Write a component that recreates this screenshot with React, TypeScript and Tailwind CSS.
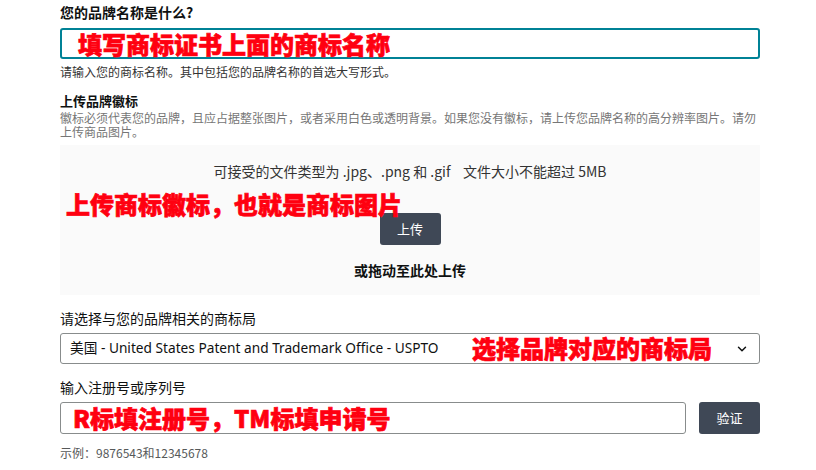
import { ChevronDown } from "lucide-react";

const cjk = { fontFamily: '"Noto Sans CJK SC", "Noto Sans", sans-serif' };
const latin = { fontFamily: '"Noto Sans", "Noto Sans CJK SC", sans-serif' };

function Note({ children, className }: { children: React.ReactNode; className: string }) {
  return (
    <span
      className={`pointer-events-none absolute whitespace-nowrap text-[24px] font-black leading-none text-[#ff0010] [-webkit-text-stroke:0.7px_#ff0010] ${className}`}
      style={cjk}
    >
      {children}
    </span>
  );
}

export default function App() {
  return (
    <div className="h-[470px] w-[816px] overflow-hidden bg-white text-[#0f1111]" style={cjk}>
      <div className="ml-[60px] flex w-[700px] flex-col">
        <h2 className="mt-[3px] text-[14px] font-bold leading-[18px]">您的品牌名称是什么?</h2>
        <div className="relative mt-[7px] h-[31px] rounded-[3px] border-2 border-[#008296]">
          <Note className="left-[16px] top-[2px]">填写商标证书上面的商标名称</Note>
        </div>
        <p className="mt-[5px] text-[12px] leading-[16px] text-[#333]">
          请输入您的商标名称。其中包括您的品牌名称的首选大写形式。
        </p>

        <h3 className="mt-[13px] text-[13px] font-bold leading-[16px]">上传品牌徽标</h3>
        <p className="mt-[2px] text-[12px] leading-[14px] text-[#767676]">
          徽标必须代表您的品牌，且应占据整张图片，或者采用白色或透明背景。如果您没有徽标，请上传您品牌名称的高分辨率图片。请勿
          <br />
          上传商品图片。
        </p>

        <div className="relative mt-[6px] flex h-[150px] flex-col items-center bg-[#fafafa]">
          <p className="mt-[17px] text-[14px] leading-[18px] text-[#333]">
            可接受的文件类型为 .jpg、.png 和 .gif&nbsp;&nbsp;&nbsp;&nbsp;文件大小不能超过 5MB
          </p>
          <button className="mt-[33px] h-[32px] w-[61px] rounded-[3px] bg-[#3f4856] text-[13px] text-white">
            上传
          </button>
          <p className="mt-[16px] text-[14px] font-bold leading-[18px]">或拖动至此处上传</p>
          <Note className="left-[6px] top-[47px]">上传商标徽标，也就是商标图片</Note>
        </div>

        <label className="mt-[14px] text-[14px] leading-[18px] text-[#0f1111]">请选择与您的品牌相关的商标局</label>
        <div className="relative mt-[6px] flex h-[31px] items-center rounded-[3px] border border-[#888c8c] pl-[9px] pr-[10px]">
          <span className="text-[13.7px] text-[#0f1111]" style={latin}>
            美国 - United States Patent and Trademark Office - USPTO
          </span>
          <ChevronDown className="ml-auto h-[14px] w-[14px] text-[#0f1111]" strokeWidth={2.5} />
          <Note className="left-[411px] top-[2px]">选择品牌对应的商标局</Note>
        </div>

        <label className="mt-[14px] text-[14px] leading-[18px]">输入注册号或序列号</label>
        <div className="mt-[6px] flex gap-[13px]">
          <div className="relative h-[32px] flex-1 rounded-[3px] border border-[#888c8c]">
            <Note className="left-[12px] top-[3px]">R标填注册号，TM标填申请号</Note>
          </div>
          <button className="h-[32px] w-[61px] rounded-[3px] bg-[#3f4856] text-[13px] text-white">验证</button>
        </div>
        <p className="mt-[11px] text-[12px] leading-[16px] text-[#565959]">示例：9876543和12345678</p>
      </div>
    </div>
  );
}
